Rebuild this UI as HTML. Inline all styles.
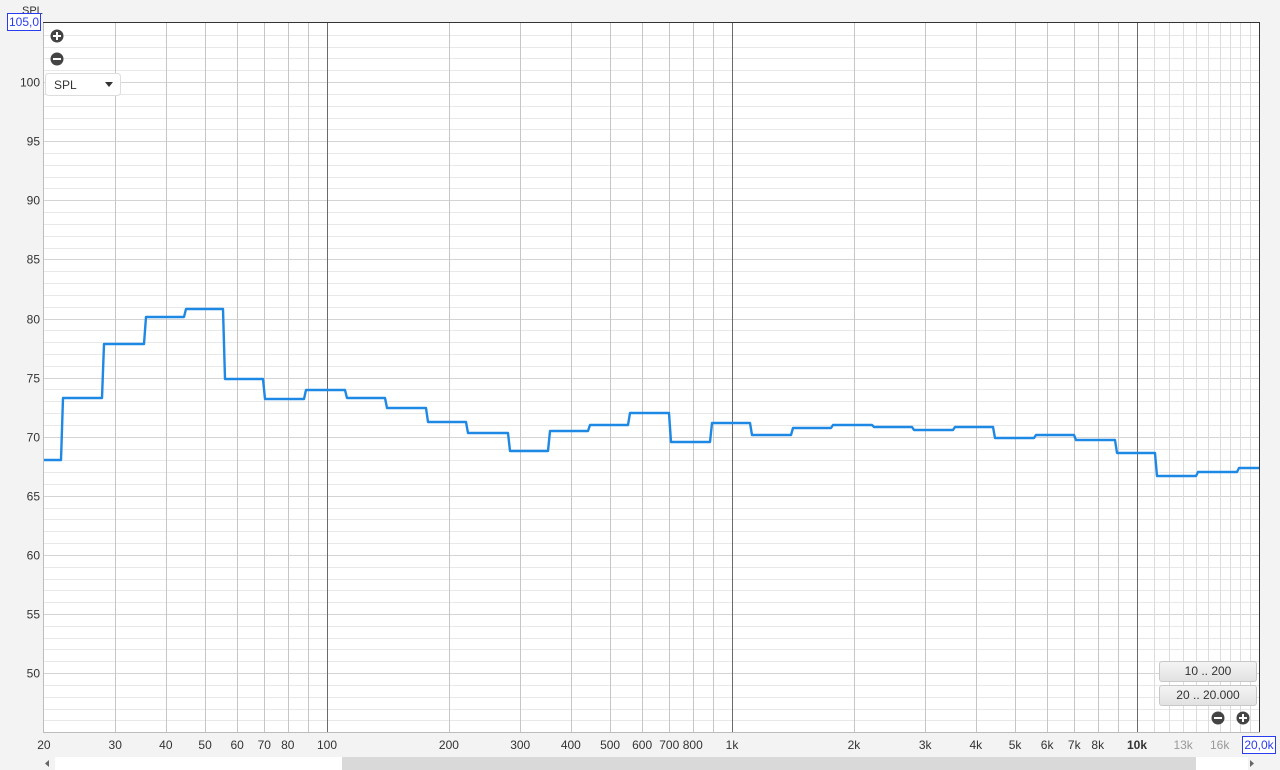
<!DOCTYPE html>
<html><head><meta charset="utf-8"><style>
html,body{margin:0;padding:0;background:#f3f3f3;width:1280px;height:770px;overflow:hidden;font-family:"Liberation Sans",sans-serif}
.btn{position:absolute;left:1159px;width:96px;height:19px;border:1px solid #c8c8c8;border-radius:3px;background:linear-gradient(#f4f4f4,#e2e2e2);font-size:12px;color:#333;text-align:center;line-height:19px}
</style></head><body>
<svg width="1280" height="770" style="position:absolute;left:0;top:0" font-family="Liberation Sans, sans-serif">
<rect x="43" y="22" width="1216" height="710" fill="#fff"/>
<g id="h" stroke="#e6e6e6" stroke-width="1"></g>
<g id="v"></g>
<rect x="43.5" y="22.5" width="1216" height="710" fill="none" stroke="#bdbdbd"/>
<line x1="43" y1="22.5" x2="1259" y2="22.5" stroke="#333"/>
<line x1="1259.5" y1="22" x2="1259.5" y2="732" stroke="#333"/>
<g id="yl" font-size="12" fill="#333" text-anchor="end"></g>
<g id="xl" font-size="12" fill="#333" text-anchor="middle"></g>
<polyline fill="none" stroke="#1e88e5" stroke-width="2.4" stroke-linejoin="round" points="44,460 61,460 63,398 102,398 104,344 144,344 146,317 184,317 186,309 223,309 225,379 263,379 265,399 304,399 306,390 345,390 347,398 385,398 387,408 426,408 428,422 466,422 468,433 508,433 510,451 548,451 550,431 588,431 590,425 628,425 630,413 669,413 671,442 710,442 712,423 750,423 752,435 791,435 793,428 831,428 833,425 872,425 874,427 912,427 914,430 953,430 955,427 993,427 995,438 1034,438 1036,435 1074,435 1076,440 1115,440 1117,453 1155,453 1157,476 1196,476 1198,472 1237,472 1239,468 1259,468"/>
<text x="22" y="14" font-size="11" fill="#333">SPL</text>
<rect x="7.5" y="13.5" width="33" height="17" fill="#fff" stroke="#2a3cf0"/>
<text x="24" y="26" font-size="12" fill="#2a3cf0" text-anchor="middle">105,0</text>
<rect x="1242.5" y="736.5" width="33" height="17" fill="#fff" stroke="#2a3cf0"/>
<text x="1259" y="749" font-size="12" fill="#2a3cf0" text-anchor="middle">20,0k</text>
<g fill="#444"><circle cx="57" cy="36" r="6.5"/><circle cx="57" cy="59" r="6.5"/><circle cx="1218" cy="718" r="6.5"/><circle cx="1243" cy="718" r="6.5"/></g>
<g stroke="#fff" stroke-width="2"><path d="M53 36h8M57 32v8M53 59h8M1214 718h8M1239 718h8M1243 714v8"/></g>
<rect x="45.5" y="73.5" width="75" height="22" rx="3" fill="#fff" stroke="#ddd"/>
<text x="54" y="89" font-size="12" fill="#333">SPL</text>
<path d="M105 82h8l-4 5z" fill="#333"/>
<rect x="0" y="756" width="1280" height="14" fill="#f3f3f3"/>
<rect x="55" y="757" width="1193" height="13" fill="#fff"/>
<rect x="342" y="757" width="854" height="13" fill="#d9d9d9"/>
<path d="M49 760v7l-4-3.5z M1250 760v7l4-3.5z" fill="#666"/>
</svg>
<div class="btn" style="top:661px">10 .. 200</div>
<div class="btn" style="top:685px">20 .. 20.000</div>
<script>
var ns="http://www.w3.org/2000/svg";
function el(g,t,a,txt){var e=document.createElementNS(ns,t);for(var k in a)e.setAttribute(k,a[k]);if(txt)e.textContent=txt;document.getElementById(g).appendChild(e);}
for(var d=46;d<105;d++){var y=Math.round(23+(105-d)*11.82)+0.5;el('h','line',{x1:43,x2:1259,y1:y,y2:y,stroke:d%5==0?'#d4d4d4':'#e8e8e8'});
 if(d%5==0&&d>=50&&d<=100)el('yl','text',{x:40,y:y+4},String(d));}
function X(f){return 327+(Math.log10(f)-2)*405;}
var fs=[];for(var f=30;f<=90;f+=10)fs.push(f);for(f=200;f<=900;f+=100)fs.push(f);for(f=2000;f<=9000;f+=1000)fs.push(f);for(f=11000;f<=19000;f+=1000)fs.push(f);
fs.forEach(function(f){var x=Math.round(X(f))+0.5;el('v','line',{x1:x,x2:x,y1:22,y2:732,stroke:f>10000?'#dcdcdc':'#c6c6c6'});});
[100,1000,10000].forEach(function(f){var x=Math.round(X(f))+0.5;el('v','line',{x1:x,x2:x,y1:22,y2:732,stroke:'#6a6a6a'});});
var L=[[20,'20'],[30,'30'],[40,'40'],[50,'50'],[60,'60'],[70,'70'],[80,'80'],[100,'100'],[200,'200'],[300,'300'],[400,'400'],[500,'500'],[600,'600'],[700,'700'],[800,'800'],[1000,'1k'],[2000,'2k'],[3000,'3k'],[4000,'4k'],[5000,'5k'],[6000,'6k'],[7000,'7k'],[8000,'8k'],[10000,'10k'],[13000,'13k'],[16000,'16k']];
L.forEach(function(p){var a={x:X(p[0]),y:749};if(p[0]>10000)a.fill='#999';if(p[0]==10000)a['font-weight']='bold';el('xl','text',a,p[1]);});
</script>
</body></html>
